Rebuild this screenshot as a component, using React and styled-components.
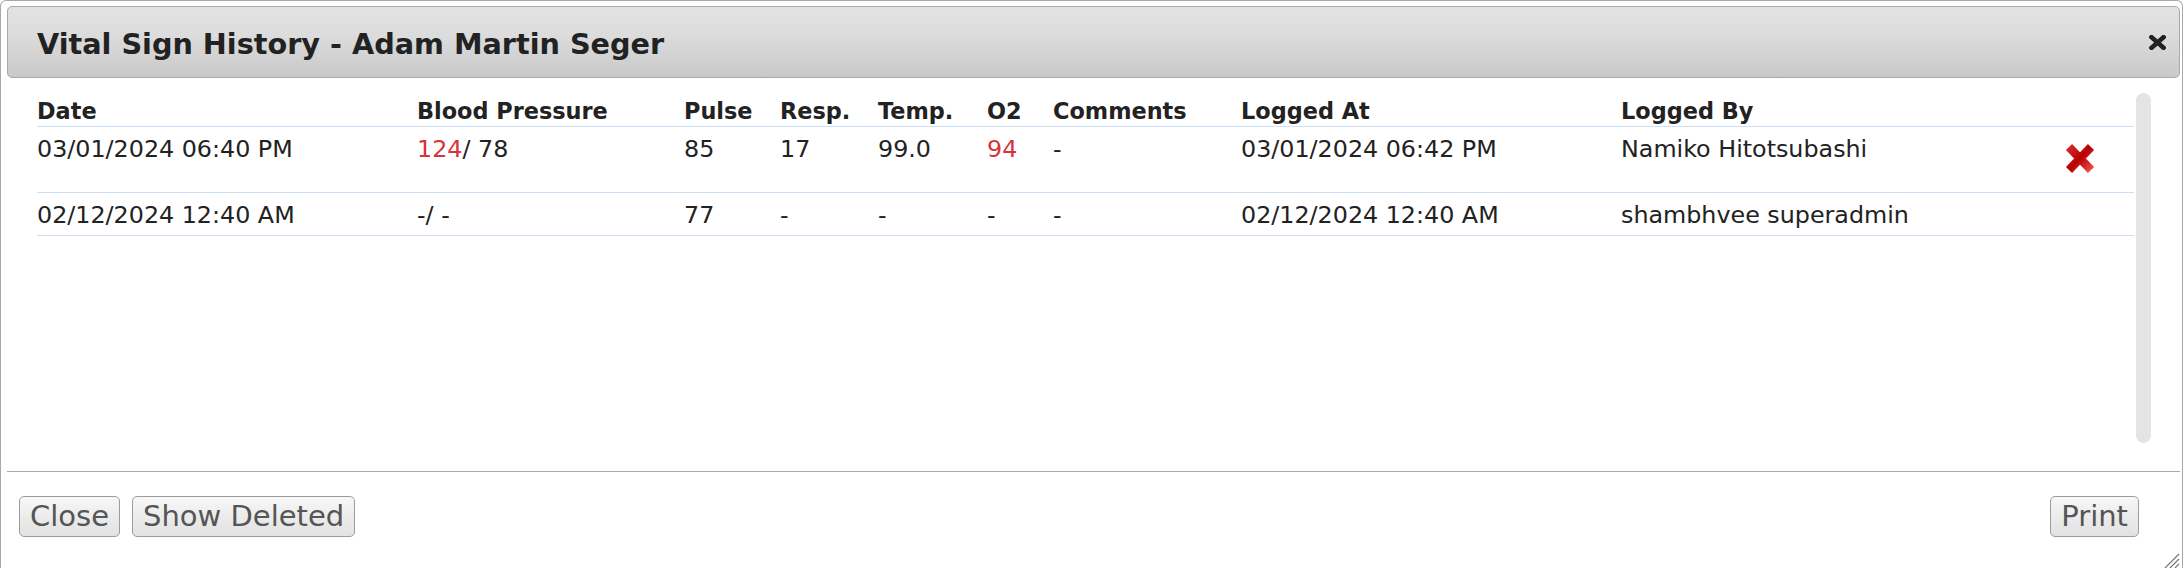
import React from "react";
import styled, { createGlobalStyle } from "styled-components";

const GlobalStyle = createGlobalStyle`
  html, body {
    margin: 0;
    padding: 0;
    background: #fff;
  }
  body {
    font-family: "DejaVu Sans", Verdana, sans-serif;
    color: #222;
    overflow: hidden;
  }
`;

const columns = "380px 267px 96px 98px 109px 66px 188px 380px 1fr 70px";

const vitals = [
  {
    date: "03/01/2024 06:40 PM",
    sys: "124",
    sysHigh: true,
    dia: "78",
    pulse: "85",
    resp: "17",
    temp: "99.0",
    o2: "94",
    o2Low: true,
    comments: "-",
    loggedAt: "03/01/2024 06:42 PM",
    loggedBy: "Namiko Hitotsubashi",
    deletable: true,
  },
  {
    date: "02/12/2024 12:40 AM",
    sys: "-",
    dia: "-",
    pulse: "77",
    resp: "-",
    temp: "-",
    o2: "-",
    comments: "-",
    loggedAt: "02/12/2024 12:40 AM",
    loggedBy: "shambhvee superadmin",
  },
];

function CloseThick() {
  return (
    <svg width="17" height="15" viewBox="0 0 17 15">
      <path d="M2.5 2.2 L14.5 12.8 M14.5 2.2 L2.5 12.8" stroke="#222" strokeWidth="4.6" strokeLinecap="square" />
    </svg>
  );
}

function DeleteIcon() {
  return (
    <svg width="32" height="31" viewBox="0 0 32 31">
      <defs>
        <linearGradient id="delRed" x1="0" y1="0" x2="1" y2="1">
          <stop offset="0" stopColor="#d42a2a" />
          <stop offset="0.5" stopColor="#b80000" />
          <stop offset="1" stopColor="#ee4a4a" />
        </linearGradient>
      </defs>
      <path
        d="M5 4 L27 27 M27 4 L5 27"
        stroke="url(#delRed)"
        strokeWidth="8.5"
        strokeLinecap="butt"
      />
    </svg>
  );
}

function ResizeGrip() {
  return (
    <svg width="18" height="17" viewBox="0 0 18 17">
      <path d="M17 3 L3 17 M17 8 L8 17 M17 13 L13 17" stroke="#777" strokeWidth="1.2" />
    </svg>
  );
}

export default function App() {
  return (
    <>
      <GlobalStyle />
      <Dialog>
        <TitleBar>
          <Title>Vital Sign History - Adam Martin Seger</Title>
          <TitleClose>
            <CloseThick />
          </TitleClose>
        </TitleBar>

        <Content>
          <TableWrap>
            <HeadRow>
              <span>Date</span>
              <span>Blood Pressure</span>
              <span>Pulse</span>
              <span>Resp.</span>
              <span>Temp.</span>
              <span>O2</span>
              <span>Comments</span>
              <span>Logged At</span>
              <span>Logged By</span>
              <span />
            </HeadRow>
            {vitals.map((v) => (
              <Row key={v.date}>
                <span>{v.date}</span>
                <span>
                  <Value $alert={v.sysHigh}>{v.sys}</Value>/ {v.dia}
                </span>
                <span>{v.pulse}</span>
                <span>{v.resp}</span>
                <span>{v.temp}</span>
                <Value $alert={v.o2Low}>{v.o2}</Value>
                <span>{v.comments}</span>
                <span>{v.loggedAt}</span>
                <span>{v.loggedBy}</span>
                <DeleteCell>{v.deletable && <DeleteIcon />}</DeleteCell>
              </Row>
            ))}
          </TableWrap>
          <ScrollRail />
        </Content>

        <ButtonPane>
          <ButtonGroup>
            <Button>Close</Button>
            <Button>Show Deleted</Button>
          </ButtonGroup>
          <Button>Print</Button>
        </ButtonPane>

        <Grip>
          <ResizeGrip />
        </Grip>
      </Dialog>
    </>
  );
}

const Dialog = styled.div`
  position: relative;
  box-sizing: border-box;
  width: 2183px;
  height: 568px;
  padding: 5px 2px 0 6px;
  border: 1px solid #a8a8a8;
  border-bottom: none;
  border-radius: 6px 6px 0 0;
  background: #fff;
`;

const TitleBar = styled.div`
  box-sizing: border-box;
  height: 72px;
  display: flex;
  align-items: center;
  justify-content: space-between;
  padding: 3px 13px 0 29px;
  border: 1px solid #a9a9a9;
  border-radius: 5px;
  background: linear-gradient(#e3e3e3, #dcdcdc 40%, #c9c9c9);
`;

const Title = styled.span`
  font-size: 28.7px;
  font-weight: bold;
  color: #222;
`;

const TitleClose = styled.span`
  display: flex;
  margin-top: -2px;
`;

const Content = styled.div`
  display: flex;
  gap: 2px;
  height: 350px;
  margin-top: 15px;
  padding: 0 29px 0 30px;
`;

const TableWrap = styled.div`
  flex: 1;
  padding-top: 5px;
`;

const HeadRow = styled.div`
  display: grid;
  grid-template-columns: ${columns};
  padding-bottom: 2px;
  border-bottom: 1px solid #cbdff5;
  font-size: 22.4px;
  line-height: 26px;
  font-weight: bold;
  color: #222;
  white-space: nowrap;
`;

const Row = styled.div`
  display: grid;
  grid-template-columns: ${columns};
  align-items: start;
  padding: 8px 0 6px;
  border-bottom: 1px solid #cbdff5;
  font-size: 23.8px;
  line-height: 28px;
  color: #222;
  white-space: nowrap;
`;

const Value = styled.span`
  color: ${(p) => (p.$alert ? "#d8333b" : "inherit")};
`;

const DeleteCell = styled.span`
  display: flex;
  min-height: 28px;
  svg {
    margin: 8px 0 12px;
  }
`;

const ScrollRail = styled.div`
  width: 15px;
  height: 350px;
  border-radius: 8px;
  background: #e4e4e4;
`;

const ButtonPane = styled.div`
  display: flex;
  justify-content: space-between;
  align-items: flex-start;
  margin-top: 28px;
  padding: 24px 41px 0 12px;
  border-top: 1px solid #a8a8a8;
`;

const ButtonGroup = styled.div`
  display: flex;
  gap: 12px;
`;

const Button = styled.button`
  font-family: "DejaVu Sans", Verdana, sans-serif;
  font-size: 29px;
  line-height: 33px;
  color: #555;
  padding: 3px 10px;
  border: 1px solid #9c9c9c;
  border-radius: 5px;
  background: linear-gradient(#f7f7f7, #ececec 50%, #e2e2e2);
  cursor: pointer;
`;

const Grip = styled.div`
  position: absolute;
  right: 2px;
  bottom: 0;
  display: flex;
`;
